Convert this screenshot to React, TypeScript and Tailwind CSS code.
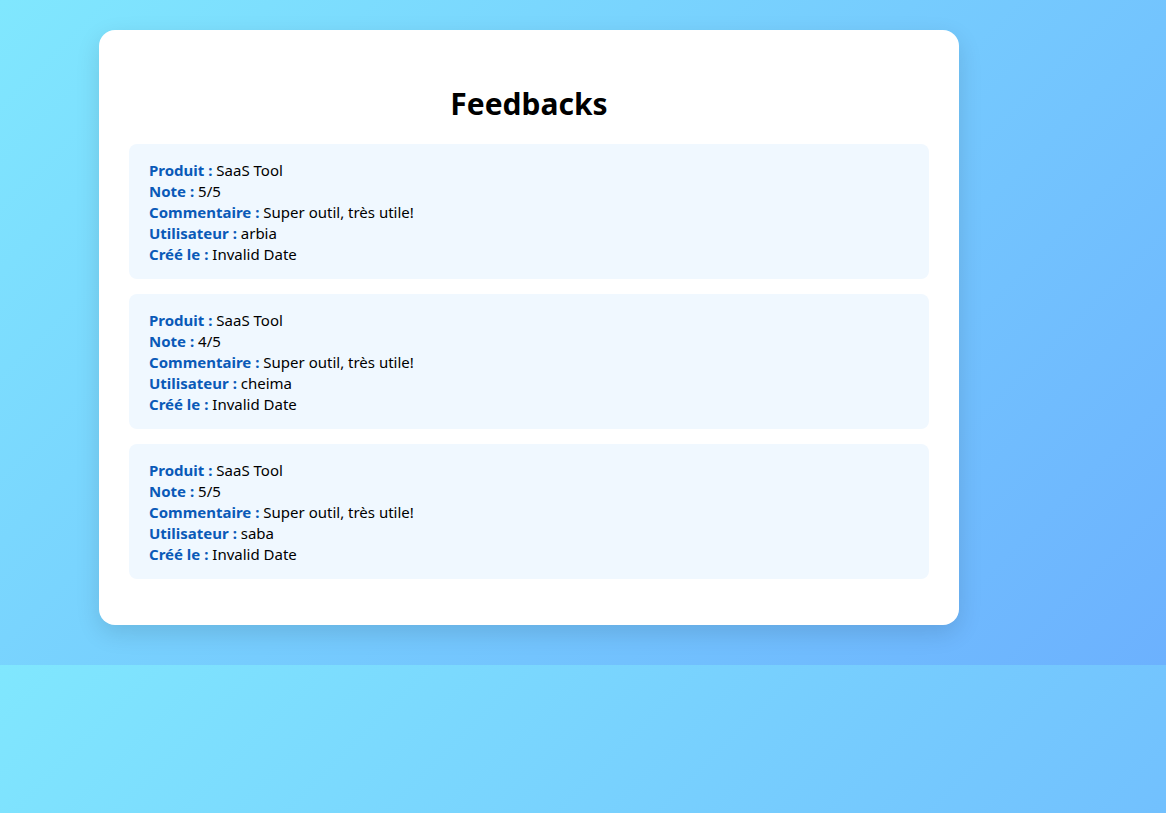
const feedbacks = [
  { produit: 'SaaS Tool', note: 5, commentaire: 'Super outil, très utile!', utilisateur: 'arbia' },
  { produit: 'SaaS Tool', note: 4, commentaire: 'Super outil, très utile!', utilisateur: 'cheima' },
  { produit: 'SaaS Tool', note: 5, commentaire: 'Super outil, très utile!', utilisateur: 'saba' },
]

function Row({ label, value }: { label: string; value: string }) {
  return (
    <div>
      <strong className="font-bold text-[#0a5ab8]">{label} :</strong> {value}
    </div>
  )
}

export default function App() {
  return (
    <div
      className="min-h-[813px] bg-[linear-gradient(135deg,#80e7fe,#6cb1fe)] bg-[length:100%_665px] bg-repeat-y pt-[30px] pl-[99px] text-black"
      style={{ fontFamily: '"Noto Sans", "Open Sans", sans-serif' }}
    >
      <div className="w-[860px] rounded-2xl bg-white px-[30px] pt-[56px] pb-[46px] shadow-[0_8px_24px_rgba(0,0,0,0.12)]">
        <h2 className="mb-[22px] text-center text-[30px] font-bold leading-[36px]">Feedbacks</h2>
        <div className="flex flex-col gap-[15px]">
          {feedbacks.map((f) => (
            <div key={f.utilisateur} className="rounded-lg bg-[#f0f8ff] px-5 pt-4 pb-[14px] text-[15px] leading-[21px]">
              <Row label="Produit" value={f.produit} />
              <Row label="Note" value={`${f.note}/5`} />
              <Row label="Commentaire" value={f.commentaire} />
              <Row label="Utilisateur" value={f.utilisateur} />
              <Row label="Créé le" value="Invalid Date" />
            </div>
          ))}
        </div>
      </div>
    </div>
  )
}
